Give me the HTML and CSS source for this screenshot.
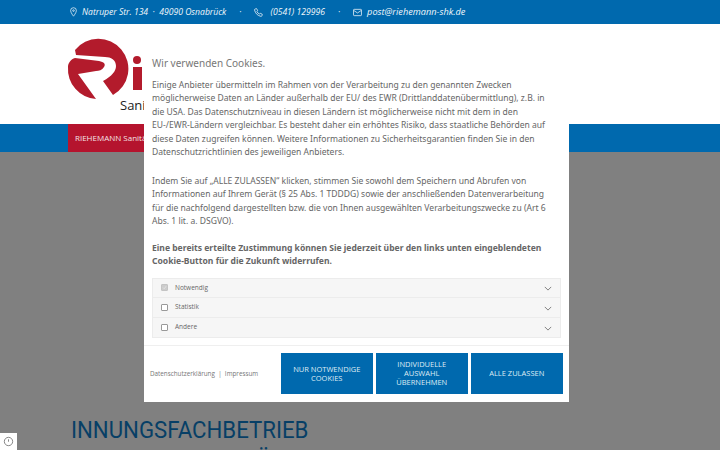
FILE: index.html
```html
<!DOCTYPE html>
<html lang="de">
<head>
<meta charset="utf-8">
<title>Riehemann</title>
<link rel="stylesheet" href="styles.css">
</head>
<body>
<div class="topbar">
  <span class="contact"><svg class="ico" viewBox="0 0 8 11"><path d="M4 .6A3.300 3.300 0 0 0 .7 3.900C.7 6.200 4 10.300 4 10.300s3.300-4.100 3.300-6.400A3.300 3.300 0 0 0 4 .6z"/><circle cx="4" cy="3.900" r=".9"/></svg>Natruper Str. 134<span class="sep">·</span>49090 Osnabrück</span>
  <span class="dot">·</span>
  <span class="contact"><svg class="ico ico-wide" viewBox="0 0 10 10"><path d="M1.300 1.100L2.900.7l1.200 2.200-1 .9c.6 1.300 1.700 2.400 3 3l.9-1 2.200 1.200-.4 1.600c-.1.500-.6.800-1.100.7C4.100 8.600 1.400 5.900.6 2.200.5 1.700.8 1.200 1.300 1.100z"/></svg>(0541) 129996</span>
  <span class="dot">·</span>
  <span class="contact mail"><svg class="ico ico-wide ico-mail" viewBox="0 0 10 9"><rect x=".6" y="1" width="8.800" height="7" rx=".8"/><path d="M.8 2.200L5 5l4.200-2.800"/></svg>post@riehemann-shk.de</span>
</div>
<header class="brand">
  <svg class="logo" viewBox="60 32 90 84">
    <path class="logo-red" d="M75 50A30 30 0 1 1 113 95L103 81C112 76 116 71 116 66C116 60 111 57 105 57L76 55Z"/>
    <path class="logo-red" d="M68 67C68 63 71 59 75 58L99 61C104 62 106 64 104 67C102 70 99 71 96 71L78 74L96 99A30 30 0 0 1 68 67Z"/>
    <circle class="logo-red" cx="137" cy="60" r="4"/>
    <rect class="logo-red" x="133" y="67" width="9" height="23"/>
  </svg>
  <div class="brand-tail">Sani</div>
</header>
<nav class="nav"><div class="nav-item">RIEHEMANN Sanitä</div></nav>
<main class="content">
  <h1 class="headline">INNUNGSFACHBETRIEB<br>HEIZUNG &amp; SANITÄR</h1>
</main>
<button class="privacy-tab" aria-label="Cookie-Einstellungen"><svg viewBox="0 0 10 10"><circle cx="5" cy="5" r="3.800"/><path d="M5 3v2.200"/></svg></button>

<section class="modal">
  <div class="modal-body">
    <h2 class="modal-title">Wir verwenden Cookies.</h2>
    <p class="p-first">Einige Anbieter übermitteln im Rahmen von der Verarbeitung zu den genannten Zwecken möglicherweise Daten an Länder außerhalb der EU/ des EWR (Drittlanddatenübermittlung), z.B. in die USA. Das Datenschutzniveau in diesen Ländern ist möglicherweise nicht mit dem in den EU-/EWR-Ländern vergleichbar. Es besteht daher ein erhöhtes Risiko, dass staatliche Behörden auf diese Daten zugreifen können. Weitere Informationen zu Sicherheitsgarantien finden Sie in den Datenschutzrichtlinien des jeweiligen Anbieters.</p>
    <p>Indem Sie auf „ALLE ZULASSEN“ klicken, stimmen Sie sowohl dem Speichern und Abrufen von Informationen auf Ihrem Gerät (§ 25 Abs. 1 TDDDG) sowie der anschließenden Datenverarbeitung für die nachfolgend dargestellten bzw. die von Ihnen ausgewählten Verarbeitungszwecke zu (Art 6 Abs. 1 lit. a. DSGVO).</p>
    <p class="strong">Eine bereits erteilte Zustimmung können Sie jederzeit über den links unten eingeblendeten Cookie-Button für die Zukunft widerrufen.</p>
    <div class="cats">
      <div class="cat"><span class="box box-on"><svg viewBox="0 0 8 8"><path d="M1.500 4l2 2 3-4"/></svg></span><span class="cat-name">Notwendig</span><svg class="chev" viewBox="0 0 10 6"><path d="M1 1l4 4 4-4"/></svg></div>
      <div class="cat"><span class="box"></span><span class="cat-name">Statistik</span><svg class="chev" viewBox="0 0 10 6"><path d="M1 1l4 4 4-4"/></svg></div>
      <div class="cat"><span class="box"></span><span class="cat-name">Andere</span><svg class="chev" viewBox="0 0 10 6"><path d="M1 1l4 4 4-4"/></svg></div>
    </div>
  </div>
  <div class="modal-foot">
    <div class="links">Datenschutzerklärung &nbsp;|&nbsp; Impressum</div>
    <div class="btn">NUR NOTWENDIGE COOKIES</div>
    <div class="btn">INDIVIDUELLE AUSWAHL ÜBERNEHMEN</div>
    <div class="btn">ALLE ZULASSEN</div>
  </div>
</section>
</body>
</html>
```
FILE: styles.css
```css
* { box-sizing: border-box; }
html, body { margin: 0; height: 450px; overflow: hidden; }
body { position: relative; background: #808080; font-family: "Noto Sans", sans-serif; }

.topbar { height: 24px; background: #0069ae; color: #f2f7fb; display: flex; align-items: center; padding-left: 70px; font: italic 8.600px/24px "Open Sans", sans-serif; }
.contact { display: flex; align-items: center; white-space: pre; }
.mail { font-size: 9.200px; }
.sep { margin: 0 4.500px; }
.dot { margin: 0 13px; }
.ico { width: 7px; height: 10px; margin-right: 5px; fill: none; stroke: #fff; stroke-width: .8; flex: none; }
.ico-wide { width: 9px; height: 9px; margin-right: 7px; }
.ico-mail { margin-right: 5px; }

.brand { height: 100px; background: #fff; padding: 8px 0 0 60px; display: flex; }
.logo { width: 90px; height: 84px; flex: none; }
.logo-red { fill: #b31b2c; }
.brand-tail { font: 13px/16px "Open Sans", sans-serif; color: #222; margin: 65px 0 0 -30px; white-space: nowrap; }

.nav { height: 28px; background: #0069ae; padding-left: 68px; }
.nav-item { width: 120px; height: 28px; background: #b5142e; color: #f4e3e5; font: 8px/28px "Open Sans", sans-serif; padding-left: 7px; white-space: nowrap; }

.content { height: 298px; padding: 263px 0 0 71px; overflow: hidden; }
.headline { margin: 0; font: 400 24px/30px Roboto, sans-serif; color: #073f66; word-spacing: 3px; transform: scaleX(.925); transform-origin: left top; white-space: nowrap; }

.privacy-tab { position: absolute; left: 0; bottom: 0; width: 17px; height: 17px; padding: 3px; border: 0; background: #fff; }
.privacy-tab svg { display: block; width: 11px; height: 11px; fill: none; stroke: #666; stroke-width: .7; }

.modal { position: absolute; left: 144px; top: 48px; width: 425px; height: 354px; background: #fff; color: #666; font: 8.550px/13.500px "Noto Sans", sans-serif; display: flex; flex-direction: column; }
.modal-body { padding: 8px 8px 0; flex: 1; }
.modal-title { margin: 0 0 8.500px; font: 400 10px/14px "Noto Sans", sans-serif; color: #777; }
.modal p { margin: 0 0 13px; max-width: 401px; }
.modal .p-first { margin-bottom: 15px; }
.modal .strong { font-weight: 700; margin-bottom: 9px; }
.cats { border: 1px solid #ececec; background: #f6f6f6; }
.cat { height: 19.500px; display: flex; align-items: center; padding: 0 8px 0 8px; border-bottom: 1px solid #ececec; }
.cat:last-child { border-bottom: 0; }
.box { width: 7px; height: 7px; border: 1px solid #999; background: #fff; flex: none; display: block; border-radius: 1px; }
.box-on { background: #ccc; border-color: #c4c4c4; }
.box-on svg { display: block; width: 5px; height: 5px; fill: none; stroke: #eee; }
.cat-name { margin-left: 7px; flex: 1; font: 6.500px/10px "Open Sans", sans-serif; color: #666; }
.chev { width: 8px; height: 5px; fill: none; stroke: #666; stroke-width: 1; margin-top: 2px; }

.modal-foot { height: 57px; border-top: 1px solid #efefef; display: flex; align-items: flex-start; padding: 7px 6px 0 6px; gap: 2.500px; }
.links { flex: 1; font: 6.300px/41px "Open Sans", sans-serif; color: #777; white-space: nowrap; }
.btn { width: 92.500px; height: 41px; background: #0069ae; color: #dfebf4; font: 7.500px/9px "Open Sans", sans-serif; display: flex; align-items: center; justify-content: center; text-align: center; padding: 0 10px; }
```
